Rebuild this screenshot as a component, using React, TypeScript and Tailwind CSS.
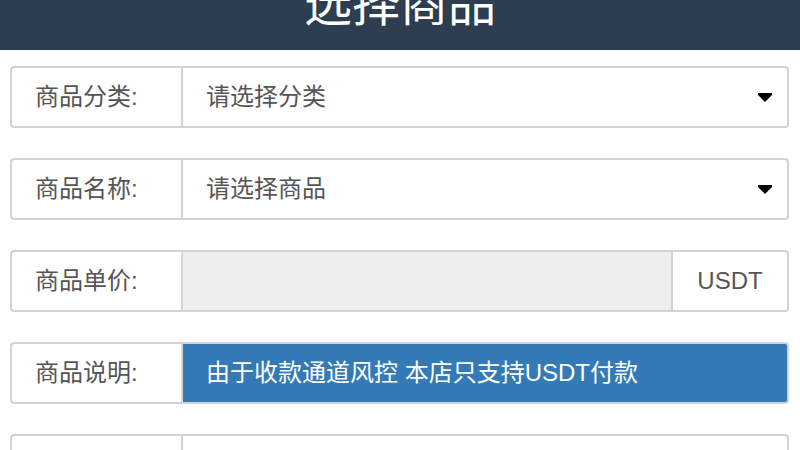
import React from "react";

const font = { fontFamily: '"Liberation Sans", "Noto Sans CJK SC", sans-serif' };

function Arrow() {
  return (
    <svg width="14" height="9" viewBox="0 0 14 9" className="shrink-0">
      <path d="M0 0 H14 V2 L7 9 L0 2 Z" fill="#000" />
    </svg>
  );
}

function Label({ children }: { children?: React.ReactNode }) {
  return (
    <div className="w-[171px] shrink-0 h-full flex items-center pl-[23px] border-2 border-r-0 border-[#d3d3d3] rounded-l-[4px] bg-white text-[24px] text-[#555]">
      {children}
    </div>
  );
}

export default function App() {
  return (
    <div className="w-[800px] h-[450px] overflow-hidden bg-white" style={font}>
      <div className="h-[50px] bg-[#2c3e50] overflow-hidden flex justify-center">
        <h1 className="text-white text-[48px] leading-[48px] font-normal mt-[-19px]">选择商品</h1>
      </div>
      <div className="px-[10px] pr-[11px] pt-[16px] flex flex-col gap-[30px]">
        <div className="flex h-[62px]">
          <Label>商品分类:</Label>
          <div className="flex-1 h-full flex items-center justify-between pl-[23px] pr-[15px] border-2 border-[#d3d3d3] rounded-r-[4px] text-[24px] text-[#555]">
            <span>请选择分类</span>
            <Arrow />
          </div>
        </div>
        <div className="flex h-[62px]">
          <Label>商品名称:</Label>
          <div className="flex-1 h-full flex items-center justify-between pl-[23px] pr-[15px] border-2 border-[#d3d3d3] rounded-r-[4px] text-[24px] text-[#555]">
            <span>请选择商品</span>
            <Arrow />
          </div>
        </div>
        <div className="flex h-[62px]">
          <Label>商品单价:</Label>
          <div className="flex-1 h-full border-2 border-[#d3d3d3] bg-[#eeeeee]" />
          <div className="w-[116px] h-full flex items-center justify-center border-2 border-l-0 border-[#d3d3d3] rounded-r-[4px] bg-white text-[24px] text-[#555]">
            USDT
          </div>
        </div>
        <div className="flex h-[62px]">
          <Label>商品说明:</Label>
          <div className="flex-1 h-full flex items-center pl-[23px] border-2 border-[#d3d3d3] rounded-r-[4px] bg-[#337ab7] text-[24px] text-white">
            由于收款通道风控 本店只支持USDT付款
          </div>
        </div>
        <div className="flex h-[62px]">
          <Label />
          <div className="flex-1 h-full border-2 border-[#d3d3d3] rounded-r-[4px] bg-white" />
        </div>
      </div>
    </div>
  );
}
